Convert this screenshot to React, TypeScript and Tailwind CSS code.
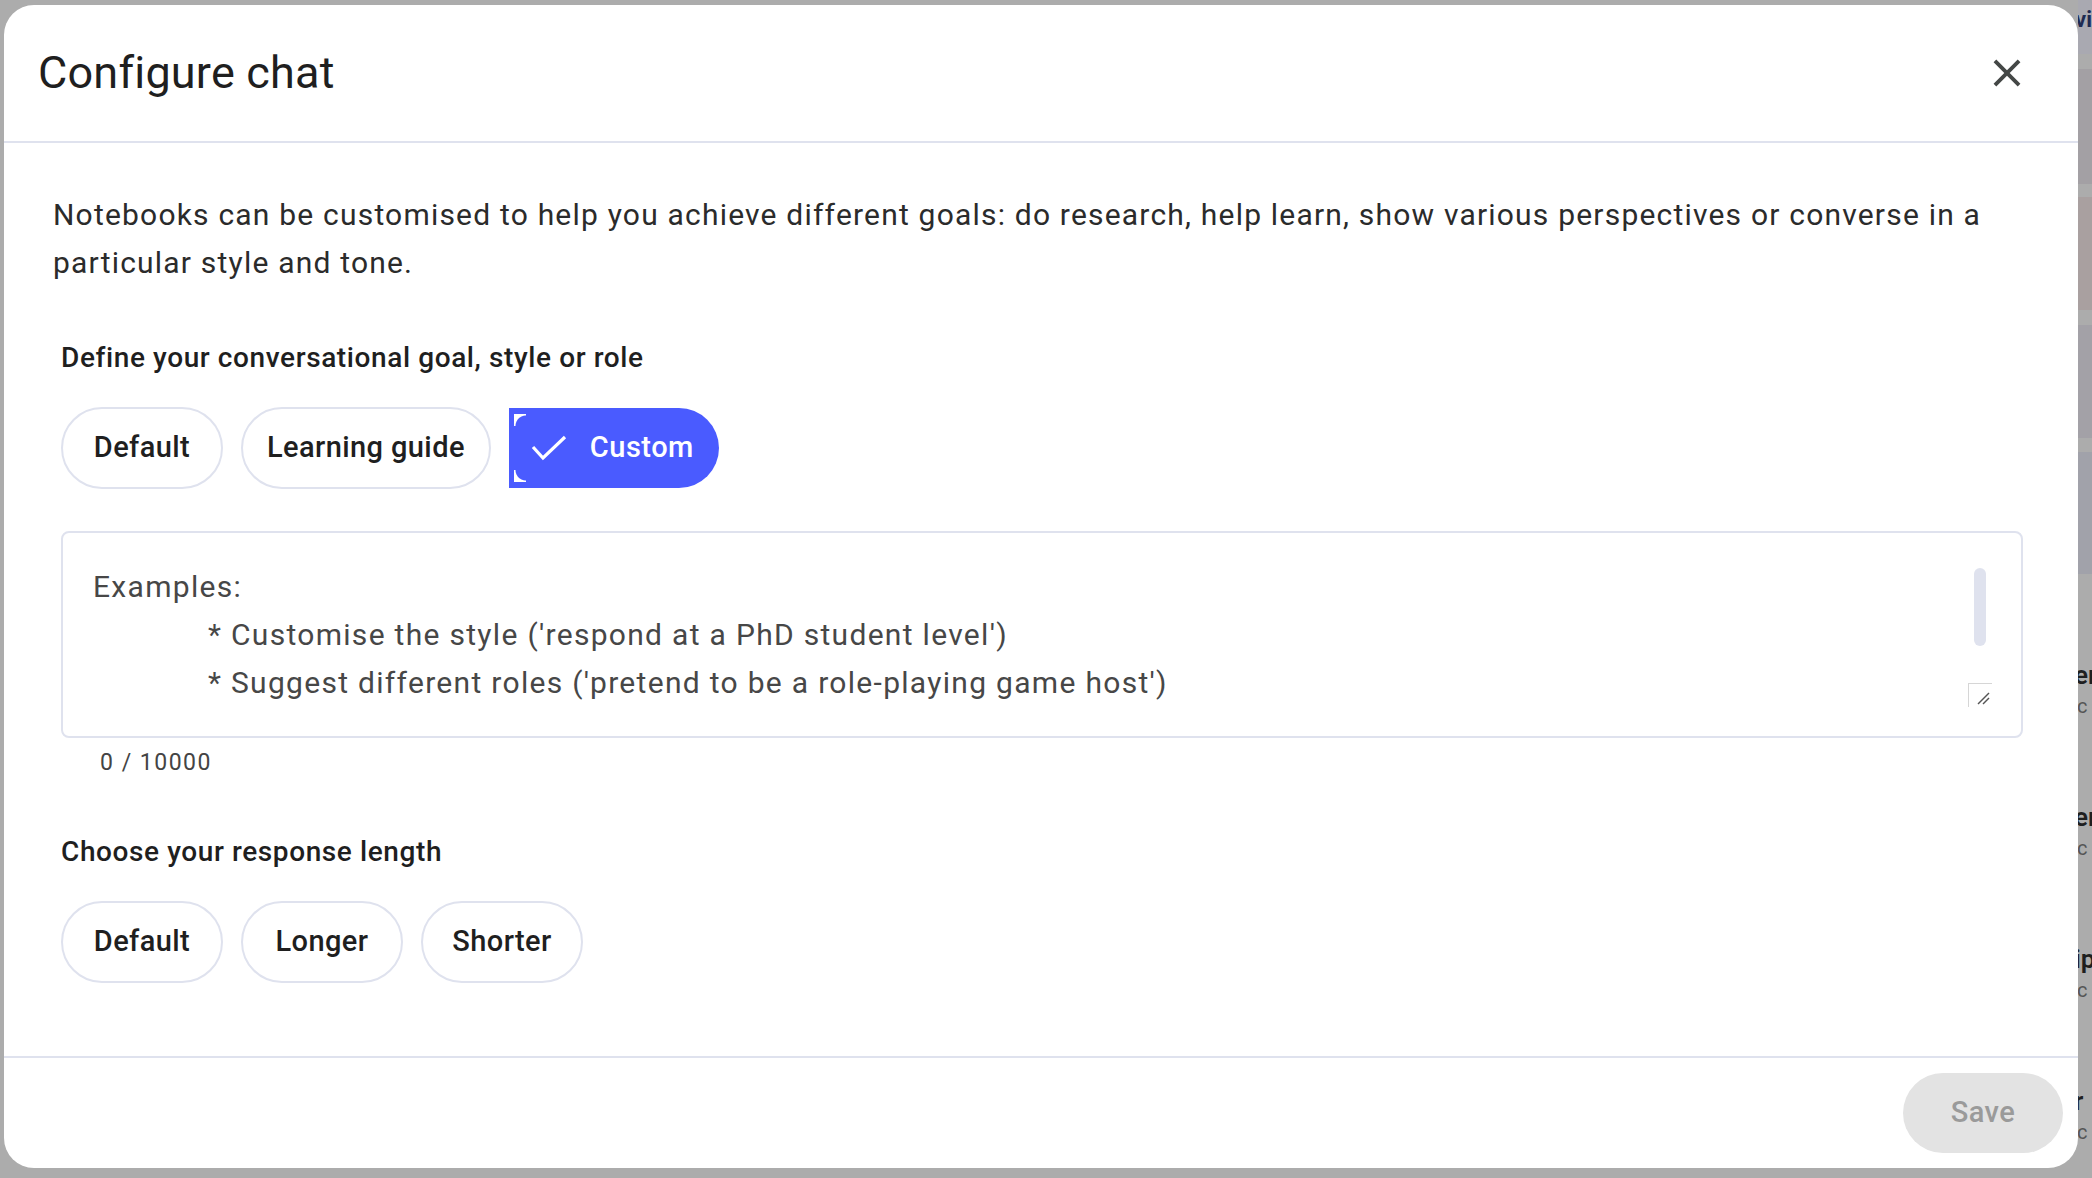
import React from "react";

const goalChips = ["Default", "Learning guide"];
const lengthChips = ["Default", "Longer", "Shorter"];

const sideBands = [
  { h: "h-[54px]", bg: "bg-[#a9a9b1]", text: "vi" },
  { h: "h-[15px]", bg: "bg-[#acacac]" },
  { h: "h-[115px]", bg: "bg-[#a3a0a4]" },
  { h: "h-[13px]", bg: "bg-[#acacac]" },
  { h: "h-[113px]", bg: "bg-[#a9a0a0]" },
  { h: "h-[15px]", bg: "bg-[#acacac]" },
  { h: "h-[113px]", bg: "bg-[#a3a1a7]" },
  { h: "h-[14px]", bg: "bg-[#acacac]" },
  { h: "h-[122px]", bg: "bg-[#a1a2aa]" },
];

const sideTexts = [
  { big: "er", small: "c" },
  { big: "er", small: "c" },
  { big: "ip", small: "c" },
  { big: "r", small: "c" },
];

function Chip({ label }: { label: string }) {
  return (
    <button className="h-[82px] min-w-[162px] px-[24px] rounded-full border-2 border-[#dfe2ee] bg-white text-[29px] font-medium tracking-[0.4px] text-[#1f1f1f] flex items-center justify-center">
      {label}
    </button>
  );
}

function CloseIcon() {
  return (
    <svg width="46" height="46" viewBox="0 0 24 24" fill="#444746">
      <path d="M19 6.41 17.59 5 12 10.59 6.41 5 5 6.41 10.59 12 5 17.59 6.41 19 12 13.41 17.59 19 19 17.59 13.41 12z" />
    </svg>
  );
}

export default function App() {
  return (
    <div className="flex h-[1178px] w-[2092px] overflow-hidden bg-[#acacac] font-[Roboto,'Noto_Sans',sans-serif]">
      {/* dialog */}
      <div className="ml-[4px] mt-[5px] flex h-[1163px] w-[2074px] shrink-0 flex-col rounded-[30px] bg-white">
        <div className="flex h-[136px] items-center justify-between pl-[34px] pr-[45px]">
          <h1 className="text-[45px] font-normal tracking-[0.2px] text-[#1f1f1f]">Configure chat</h1>
          <button className="flex h-[52px] w-[52px] items-center justify-center">
            <CloseIcon />
          </button>
        </div>
        <div className="h-[2px] bg-[#dfe2ee]" />

        <div className="flex-1 pl-[49px] pr-[55px] pt-[48px]">
          <p className="text-[30px] leading-[48px] tracking-[1.2px] text-[#2b2b2b]">
            Notebooks can be customised to help you achieve different goals: do research, help learn, show various
            perspectives or converse in a particular style and tone.
          </p>

          <div className="pl-[8px]">
            <div className="mt-[51px] text-[28px] font-medium leading-[40px] tracking-[0.6px] text-[#1f1f1f]">
              Define your conversational goal, style or role
            </div>
            <div className="mt-[29px] flex gap-[18px]">
              {goalChips.map((c) => (
                <Chip key={c} label={c} />
              ))}
              <button className="relative flex h-[80px] items-center gap-[23px] self-center rounded-l-[4px] rounded-r-full bg-[#4a5bff] pl-[22px] pr-[25px] text-[29px] font-medium tracking-[0.5px] text-white">
                <span className="absolute left-[5px] top-[6px] h-[12px] w-[12px] bg-[radial-gradient(circle_at_100%_100%,transparent_10px,white_11px)]" />
                <span className="absolute bottom-[6px] left-[5px] h-[12px] w-[12px] bg-[radial-gradient(circle_at_100%_0%,transparent_10px,white_11px)]" />
                <svg width="36" height="26" viewBox="0 0 36 26" fill="none">
                  <polyline points="2,12 12,23 34,2" stroke="white" strokeWidth="3.2" />
                </svg>
                Custom
              </button>
            </div>

            <div className="relative mt-[42px] rounded-[8px] border-2 border-[#dfe2ee] px-[30px] pb-[29px] pt-[30px] text-[30px] leading-[48px] tracking-[1.3px] text-[#474747]">
              <div>Examples:</div>
              <div className="pl-[115px]">* Customise the style ('respond at a PhD student level')</div>
              <div className="pl-[115px]">* Suggest different roles ('pretend to be a role-playing game host')</div>
              <div className="absolute right-[35px] top-[35px] h-[78px] w-[12px] rounded-full bg-[#dfe2ee]" />
              <div className="absolute bottom-[29px] right-[29px] h-[24px] w-[24px] border-l border-t border-[#d6d6d6]">
                <svg className="absolute bottom-[2px] right-[2px]" width="14" height="14" viewBox="0 0 14 14">
                  <line x1="2" y1="13" x2="13" y2="2" stroke="#555" strokeWidth="1.5" />
                  <line x1="7" y1="13" x2="13" y2="7" stroke="#555" strokeWidth="1.5" />
                </svg>
              </div>
            </div>

            <div className="ml-[39px] mt-[9px] text-[23px] leading-[32px] tracking-[1.5px] text-[#444]">0 / 10000</div>

            <div className="mt-[53px] text-[28px] font-medium leading-[40px] tracking-[0.6px] text-[#1f1f1f]">
              Choose your response length
            </div>
            <div className="mt-[29px] flex gap-[18px]">
              {lengthChips.map((c) => (
                <Chip key={c} label={c} />
              ))}
            </div>
          </div>
        </div>

        <div className="h-[2px] bg-[#dfe2ee]" />
        <div className="flex h-[110px] items-center justify-end pr-[15px]">
          <button className="h-[80px] w-[160px] rounded-full bg-[#e3e3e3] text-[29px] font-medium tracking-[0.5px] text-[#9a9a9a]">
            Save
          </button>
        </div>
      </div>

      {/* page behind the dialog */}
      <div className="flex flex-1 flex-col overflow-hidden">
        {sideBands.map((b, i) => (
          <div key={i} className={`${b.h} ${b.bg} shrink-0 overflow-hidden`}>
            {b.text && (
              <div className="-ml-[3px] mt-[8px] text-[22px] font-bold leading-[24px] text-[#1e2a52]">{b.text}</div>
            )}
          </div>
        ))}
        <div className="flex flex-col pt-[86px]">
          {sideTexts.map((t, i) => (
            <div key={i} className="mb-[84px] flex flex-col">
              <div className="-ml-[4px] text-[26px] font-semibold leading-[30px] text-[#1f1f1f]">{t.big}</div>
              <div className="-ml-[1px] mt-[4px] text-[20px] leading-[24px] text-[#555]">{t.small}</div>
            </div>
          ))}
        </div>
      </div>
    </div>
  );
}
